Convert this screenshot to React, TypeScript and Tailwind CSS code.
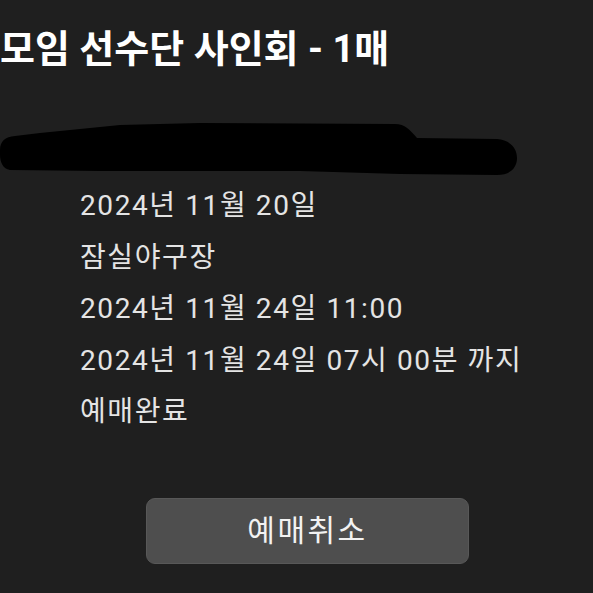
const ko = { fontFamily: "Roboto, 'Noto Sans CJK KR', sans-serif" };

const details = [
  "2024년 11월 20일",
  "잠실야구장",
  "2024년 11월 24일 11:00",
  "2024년 11월 24일 07시 00분 까지",
  "예매완료",
];

function Redaction() {
  return (
    <svg width="593" height="60" viewBox="0 120 593 60" className="block">
      <path
        d="M0 150 C0 141 5 137 15 136 L40 133 L120 125 L200 123 L395 124 C405 124 410 130 417 138 L497 139 C510 140 517 148 517 158 C517 168 510 175 497 175 L400 174 L300 171 L100 171 L10 170 C3 169 0 162 0 155 Z"
        fill="#000"
      />
    </svg>
  );
}

export default function App() {
  return (
    <div className="w-[593px] h-[593px] overflow-hidden bg-[#1f1f1f]" style={ko}>
      {/* Title */}
      <div className="pt-[26px] h-[120px]">
        <h1 className="text-[38px] leading-[46px] font-bold text-white">
          모임 선수단 사인회 - 1매
        </h1>
      </div>

      <Redaction />

      {/* Reservation details */}
      <ul className="pl-[80px] text-[28px] leading-[51.5px] text-[#e4e4e4] tracking-[1.6px]">
        {details.map((d) => (
          <li key={d}>{d}</li>
        ))}
      </ul>

      <div className="mt-[60px] ml-[146px]">
        <button className="w-[323px] h-[66px] rounded-[9px] bg-[#4e4e4e] border border-[#585858] text-[30px] text-[#f2f2f2] tracking-[2.5px]">
          예매취소
        </button>
      </div>
    </div>
  );
}
